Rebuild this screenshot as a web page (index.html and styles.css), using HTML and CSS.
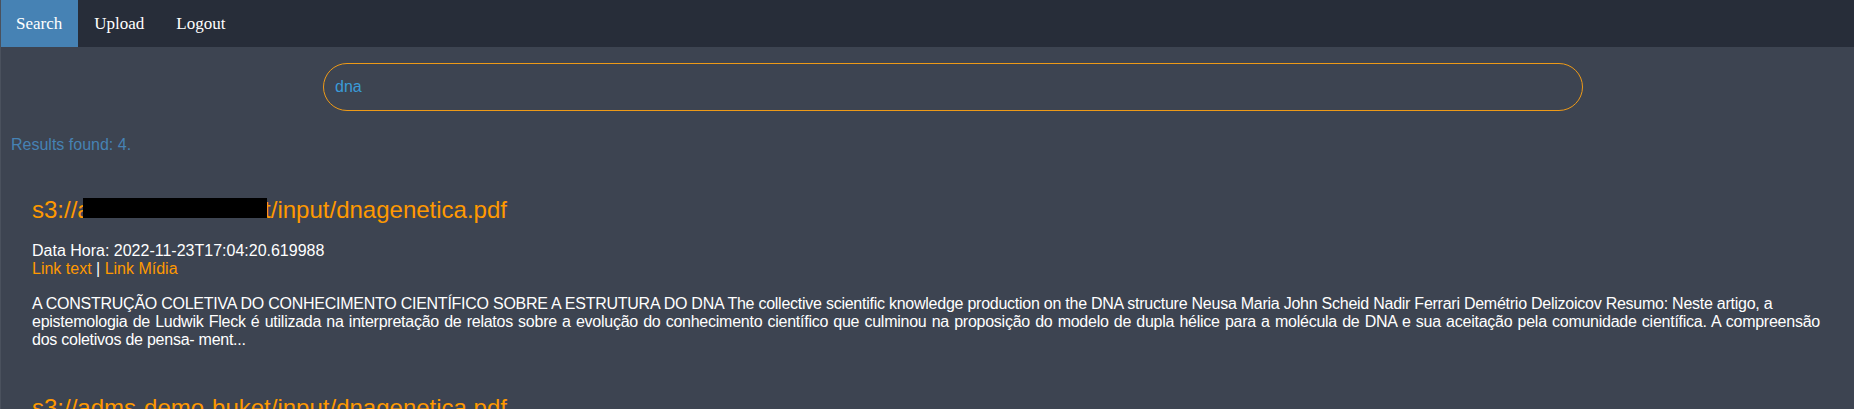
FILE: index.html
```html
<!DOCTYPE html>
<html lang="pt">
<head>
<meta charset="utf-8">
<title>Search</title>
<link rel="stylesheet" href="styles.css">
</head>
<body>
<nav class="topnav">
  <a class="nav-link active" href="#">Search</a>
  <a class="nav-link" href="#">Upload</a>
  <a class="nav-link" href="#">Logout</a>
</nav>
<main class="content">
  <form class="search-form">
    <input class="search-input" type="text" value="dna">
  </form>
  <p class="results-count">Results found: 4.</p>
  <div class="result-list">
    <div class="result">
      <h2 class="result-title">s3://adms-demo-buket/input/dnagenetica.pdf<span class="redact"></span></h2>
      <div class="meta">
        <div class="meta-date">Data Hora: 2022-11-23T17:04:20.619988</div>
        <div class="meta-links"><a href="#">Link text</a> | <a href="#">Link Mídia</a></div>
      </div>
      <p class="excerpt">A CONSTRUÇÃO COLETIVA DO CONHECIMENTO CIENTÍFICO SOBRE A ESTRUTURA DO DNA The collective scientific knowledge production on the DNA structure Neusa Maria John Scheid Nadir Ferrari Demétrio Delizoicov Resumo: Neste artigo, a<br><span class="excerpt-line">epistemologia de Ludwik Fleck é utilizada na interpretação de relatos sobre a evolução do conhecimento científico que culminou na proposição do modelo de dupla hélice para a molécula de DNA e sua aceitação pela comunidade científica. A compreensão</span><br>dos coletivos de pensa- ment...</p>
    </div>
    <div class="result">
      <h2 class="result-title">s3://adms-demo-buket/input/dnagenetica.pdf</h2>
      <div class="meta">
        <div class="meta-date">Data Hora: 2022-11-23T17:04:20.619988</div>
        <div class="meta-links"><a href="#">Link text</a> | <a href="#">Link Mídia</a></div>
      </div>
    </div>
  </div>
</main>
</body>
</html>
```
FILE: styles.css
```css
html, body {
  margin: 0;
  padding: 0;
}
body {
  background: #3d4451;
  font-family: "Liberation Sans", Arial, Helvetica, sans-serif;
  color: #ffffff;
  border-left: 1px solid #4a515d;
  min-height: 409px;
  overflow: hidden;
}
.topnav {
  display: flex;
  height: 47px;
  background: #272d39;
}
.nav-link {
  display: flex;
  align-items: center;
  padding: 0 16px;
  font-family: "Liberation Serif", "Times New Roman", serif;
  font-size: 17px;
  color: #ffffff;
  text-decoration: none;
}
.nav-link:first-child {
  padding-left: 15px;
}
.nav-link.active {
  background: #4682b4;
}
.content {
  padding: 0 0 0 9px;
}
.search-form {
  margin: 0;
  padding: 16px 271px 0 313px;
}
.search-input {
  display: block;
  box-sizing: border-box;
  width: 100%;
  height: 48px;
  margin: 0;
  padding: 0 11px;
  border: 1px solid #ee9a17;
  border-radius: 24px;
  background: transparent;
  color: #3a9bd8;
  font-family: "Liberation Sans", Arial, sans-serif;
  font-size: 16px;
  outline: none;
}
.results-count {
  margin: 25px 0 0 1px;
  font-size: 16px;
  color: #4682b4;
}
.result-list {
  display: flex;
  flex-direction: column;
  gap: 45px;
  margin-top: 42px;
  padding: 0 0 0 22px;
}
.result-title {
  position: relative;
  display: inline-block;
  align-self: flex-start;
  margin: 0 0 18px;
  font-size: 24px;
  font-weight: normal;
  color: #ff9900;
}
.redact {
  position: absolute;
  left: 51px;
  top: 2px;
  width: 184px;
  height: 20px;
  background: #000000;
}
.meta {
  font-size: 16px;
}
.meta-links a {
  color: #ff9900;
  text-decoration: none;
}
.excerpt {
  margin: 17px 0 0;
  font-size: 16px;
  letter-spacing: -0.25px;
  white-space: nowrap;
  color: #ffffff;
}
.excerpt-line {
  word-spacing: 1px;
}
```
